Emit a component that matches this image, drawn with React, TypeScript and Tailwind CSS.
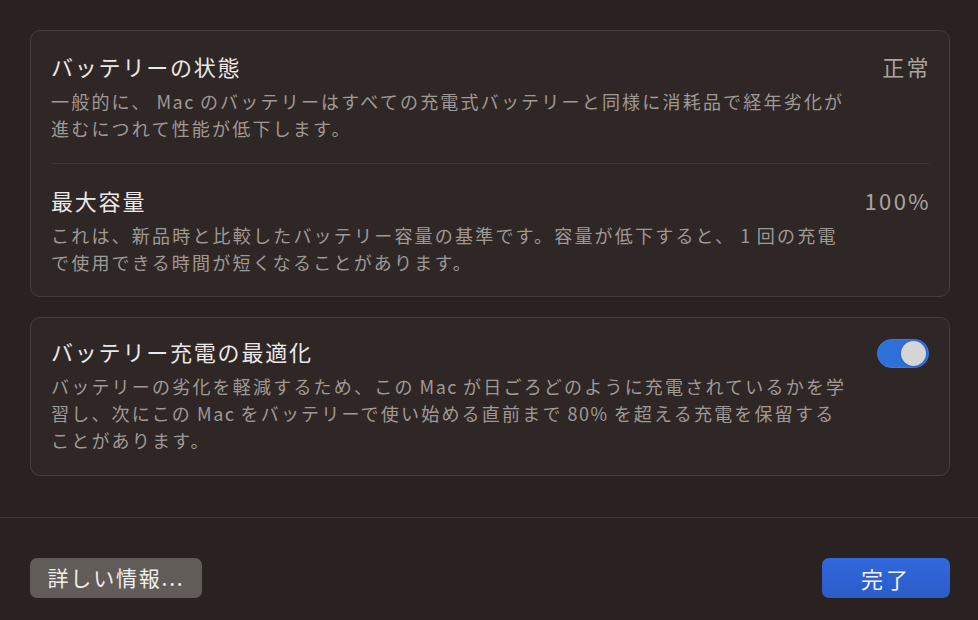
import React from 'react';

const font = { fontFamily: '"Noto Sans CJK JP", "Noto Sans", sans-serif' };

// latin words are set tighter than the kana around them
const L = ({ children }: { children: React.ReactNode }) => (
    <span className="tracking-[1.5px] mx-[5px]">{children}</span>
);

const Row = ({ title, value, lines, last }: { title: string; value: string; lines: React.ReactNode[]; last?: boolean }) => (
    <div className={last ? 'flex justify-between pt-[21px] pb-[20px]' : 'flex justify-between pt-[20px] pb-[21px] border-b border-[#3d3533]'}>
        <div>
            <div className="text-[22px] leading-[30px] tracking-[1.8px] text-[#ebe8e7]">{title}</div>
            <div className="mt-[7px] text-[18px] leading-[27px] tracking-[2.2px] text-[#9f9996]">
                {lines.map((l, i) => (
                    <div key={i}>{l}</div>
                ))}
            </div>
        </div>
        <div className="text-[22px] leading-[30px] tracking-[2.4px] -mr-[2px] text-[#aaa4a1]">{value}</div>
    </div>
);

export default function App() {
    return (
        <div style={font} className="w-[978px] h-[620px] bg-[#2a2220] flex flex-col overflow-hidden">
            <div className="pl-[30px] pr-[28px] pt-[30px]">
                <div className="rounded-[10px] border border-[#463e3b] bg-[#2f2725] px-5">
                    <Row
                        title="バッテリーの状態"
                        value="正常"
                        lines={[
                            <>一般的に、<L>Mac</L>のバッテリーはすべての充電式バッテリーと同様に消耗品で経年劣化が</>,
                            '進むにつれて性能が低下します。',
                        ]}
                    />
                    <Row
                        title="最大容量"
                        value="100%"
                        last
                        lines={[
                            <>これは、新品時と比較したバッテリー容量の基準です。容量が低下すると、<L>1</L>回の充電</>,
                            'で使用できる時間が短くなることがあります。',
                        ]}
                    />
                </div>

                <div className="mt-5 rounded-[10px] border border-[#463e3b] bg-[#2f2725] px-5 pt-[18px] pb-[21px] flex justify-between">
                    <div>
                        <div className="text-[22px] leading-[30px] tracking-[1.8px] text-[#ebe8e7]">バッテリー充電の最適化</div>
                        <div className="mt-[7px] text-[18px] leading-[27px] tracking-[2.2px] text-[#9f9996]">
                            <div>バッテリーの劣化を軽減するため、この<L>Mac</L>が日ごろどのように充電されているかを学</div>
                            <div>習し、次にこの<L>Mac</L>をバッテリーで使い始める直前まで<L>80%</L>を超える充電を保留する</div>
                            <div>ことがあります。</div>
                        </div>
                    </div>
                    <div className="mt-[3px] w-[52px] h-[29px] rounded-full bg-[#2f6fd8] border border-[#3b7ae0] flex items-center justify-end pr-[2px] shrink-0">
                        <div className="w-[25px] h-[25px] rounded-full bg-[#d6d6d6] shadow"></div>
                    </div>
                </div>
            </div>

            <div className="mt-[41px] border-t border-[#3f3735]"></div>

            <div className="flex justify-between pl-[30px] pr-[28px] pt-[40px]">
                <button className="h-[40px] w-[172px] rounded-[7px] bg-[#625c59] text-[21px] tracking-[1.8px] text-[#eeeeee]">
                    詳しい情報...
                </button>
                <button className="h-[40px] w-[128px] rounded-[7px] bg-gradient-to-b from-[#3168dc] to-[#2b5cc9] text-[22px] tracking-[3px] text-[#f2f2f2]">
                    完了
                </button>
            </div>
        </div>
    );
}
